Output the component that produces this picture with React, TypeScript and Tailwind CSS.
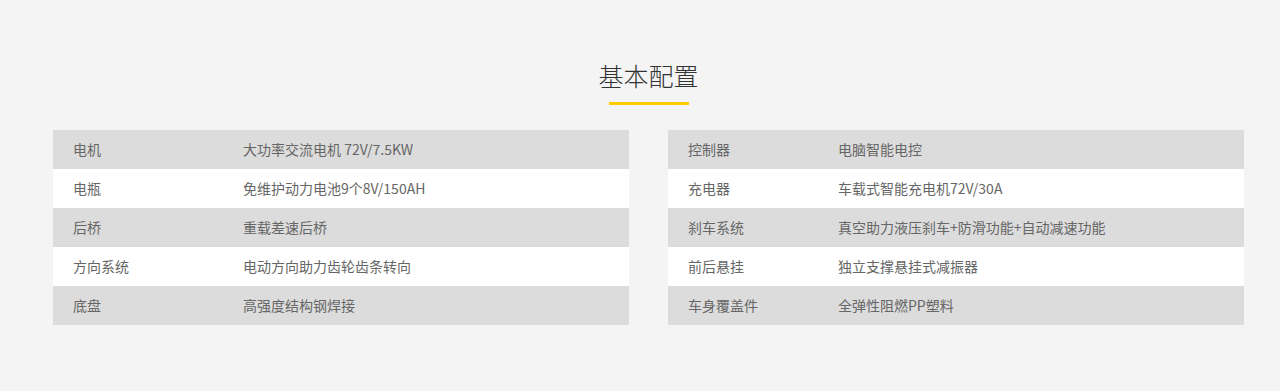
const left: [string, string][] = [
  ['电机', '大功率交流电机 72V/7.5KW'],
  ['电瓶', '免维护动力电池9个8V/150AH'],
  ['后桥', '重载差速后桥'],
  ['方向系统', '电动方向助力齿轮齿条转向'],
  ['底盘', '高强度结构钢焊接'],
];

const right: [string, string][] = [
  ['控制器', '电脑智能电控'],
  ['充电器', '车载式智能充电机72V/30A'],
  ['刹车系统', '真空助力液压刹车+防滑功能+自动减速功能'],
  ['前后悬挂', '独立支撑悬挂式减振器'],
  ['车身覆盖件', '全弹性阻燃PP塑料'],
];

function SpecTable({ rows, wide }: { rows: [string, string][]; wide?: boolean }) {
  return (
    <div className="flex flex-col">
      {rows.map(([k, v], i) => (
        <div
          key={k}
          className={
            'flex h-[39px] items-center text-[14px] text-[#666] ' +
            (i % 2 === 0 ? 'bg-[#dcdcdc]' : 'bg-white')
          }
        >
          <div className={(wide ? 'w-[190px]' : 'w-[170px]') + ' shrink-0 pl-[20px]'}>{k}</div>
          <div>{v}</div>
        </div>
      ))}
    </div>
  );
}

export default function App() {
  return (
    <div
      className="h-[391px] w-full bg-[#f4f4f4] pt-[58px]"
      style={{ fontFamily: '"Microsoft YaHei", "Noto Sans CJK SC", sans-serif' }}
    >
      <div className="ml-[53px] w-[1191px]">
        <div className="flex flex-col items-center">
          <h2 className="text-[25px] leading-[34px] font-light text-[#333]">基本配置</h2>
          <div className="mt-[10px] h-[3px] w-[80px] bg-[#ffcc00]" />
        </div>
        <div className="mt-[25px] grid grid-cols-[576px_576px] gap-x-[39px]">
          <SpecTable rows={left} wide />
          <SpecTable rows={right} />
        </div>
      </div>
    </div>
  );
}
